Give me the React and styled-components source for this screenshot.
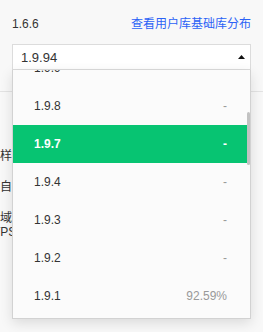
import React, { useEffect, useRef } from "react";
import styled, { createGlobalStyle } from "styled-components";

const GlobalStyle = createGlobalStyle`
  body {
    margin: 0;
    background: #f8f8f8;
    font-family: "Liberation Sans", "Noto Sans CJK SC", sans-serif;
    color: #333;
  }
`;

const Page = styled.div`
  width: 263px;
  height: 332px;
  overflow: hidden;
`;

const TopSection = styled.div`
  padding: 16px 12px 21px;
  border-bottom: 1px solid #e3e3e3;
`;

const HeaderRow = styled.div`
  display: flex;
  justify-content: space-between;
  align-items: center;
  height: 16px;
  font-size: 12px;
  line-height: 16px;
`;

const Version = styled.span`
  color: #333;
`;

const Link = styled.a`
  color: #2b62f6;
  text-decoration: none;
`;

const SelectWrap = styled.div`
  position: relative;
  margin-top: 12px;
`;

const SelectBox = styled.div`
  display: flex;
  justify-content: space-between;
  align-items: center;
  height: 24px;
  padding: 0 5px 0 8px;
  background: #fff;
  border: 1px solid #dcdcdc;
  font-size: 13px;
  color: #333;
`;

const Dropdown = styled.div`
  position: absolute;
  top: 100%;
  left: 0;
  right: 0;
  height: 248px;
  overflow-y: auto;
  scrollbar-width: none;
  background: #fbfbfb;
  border: 1px solid #d2d2d2;
  border-top: 0;
  box-shadow: 0 4px 12px rgba(0, 0, 0, 0.12);
  z-index: 10;

  &::-webkit-scrollbar {
    display: none;
  }
`;

const Thumb = styled.div`
  position: absolute;
  right: 1px;
  width: 3px;
  border-radius: 2px;
  background: #c2c2c2;
  z-index: 11;
`;

const Option = styled.div`
  display: flex;
  justify-content: space-between;
  align-items: center;
  height: 38px;
  padding: 0 23px 0 21px;
  font-size: 12px;
  color: ${(p) => (p.$active ? "#fff" : "#333")};
  font-weight: ${(p) => (p.$active ? "bold" : "normal")};
  background: ${(p) => (p.$active ? "#07c472" : "transparent")};
`;

const Rate = styled.span`
  color: ${(p) => (p.$active ? "#fff" : "#999")};
`;

const FormSection = styled.div`
  display: flex;
  flex-direction: column;
  gap: 17px;
  padding-top: 57px;
  font-size: 12px;
  line-height: 14px;
  color: #333;
  white-space: nowrap;
`;

const FormRow = styled.div`
  display: flex;
  flex-direction: column;
`;

const LabelLine = styled.span`
  margin-left: ${(p) => p.$shift || 0}px;
`;

const versions = [
  ["1.9.94", "-"],
  ["1.9.93", "-"],
  ["1.9.92", "-"],
  ["1.9.91", "-"],
  ["1.9.90", "-"],
  ["1.9.9", "-"],
  ["1.9.8", "-"],
  ["1.9.7", "-"],
  ["1.9.4", "-"],
  ["1.9.3", "-"],
  ["1.9.2", "-"],
  ["1.9.1", "92.59%"],
  ["1.9.0", "93.12%"],
  ["1.8.0", "94.40%"],
  ["1.7.0", "95.31%"],
  ["1.6.8", "96.02%"],
  ["1.6.6", "96.75%"],
  ["1.6.5", "97.10%"],
  ["1.6.4", "97.46%"],
  ["1.6.3", "97.88%"],
  ["1.6.0", "98.21%"],
  ["1.5.7", "98.60%"],
  ["1.5.3", "98.92%"],
  ["1.5.0", "99.15%"],
  ["1.4.4", "99.37%"],
  ["1.4.0", "99.52%"],
  ["1.3.0", "99.70%"],
  ["1.2.0", "99.81%"],
  ["1.1.1", "99.90%"],
  ["1.1.0", "99.96%"],
  ["1.0.0", "100%"],
];

const ROW_H = 38;
const LIST_H = 248;
const SCROLL = 211;
const SELECT_H = 26;

function Caret() {
  return (
    <svg width="7" height="4" viewBox="0 0 7 4">
      <path d="M0 4 L3.5 0 L7 4 Z" fill="#111" />
    </svg>
  );
}

export default function App() {
  const listRef = useRef(null);
  const contentH = versions.length * ROW_H;
  const thumbH = (LIST_H * LIST_H) / contentH;
  const thumbTop = SELECT_H + (SCROLL * LIST_H) / contentH - 2;

  useEffect(() => {
    if (listRef.current) listRef.current.scrollTop = SCROLL;
  }, []);

  return (
    <Page>
      <GlobalStyle />
      <TopSection>
        <HeaderRow>
          <Version>1.6.6</Version>
          <Link href="#">查看用户库基础库分布</Link>
        </HeaderRow>
        <SelectWrap>
          <SelectBox>
            <span>1.9.94</span>
            <Caret />
          </SelectBox>
          <Dropdown ref={listRef}>
            {versions.map(([v, rate]) => (
              <Option key={v} $active={v === "1.9.7"}>
                <span>{v}</span>
                <Rate $active={v === "1.9.7"}>{rate}</Rate>
              </Option>
            ))}
          </Dropdown>
          <Thumb style={{ top: thumbTop, height: thumbH }} />
        </SelectWrap>
      </TopSection>
      <FormSection>
        <FormRow>
          <LabelLine>样式</LabelLine>
        </FormRow>
        <FormRow>
          <LabelLine>自定义</LabelLine>
        </FormRow>
        <FormRow>
          <LabelLine>域名</LabelLine>
          <LabelLine $shift={-23}>HTTPS</LabelLine>
        </FormRow>
      </FormSection>
    </Page>
  );
}
